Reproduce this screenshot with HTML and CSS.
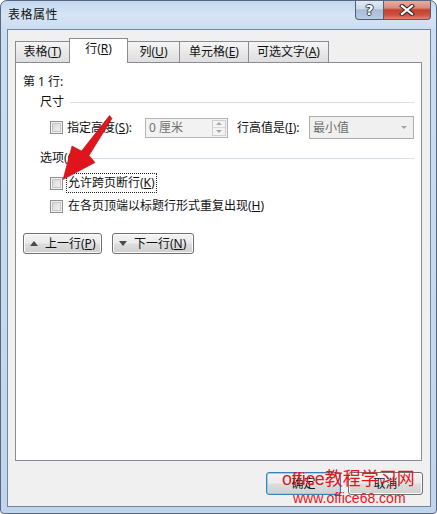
FILE: index.html
```html
<!DOCTYPE html>
<html lang="zh-CN">
<head>
<meta charset="utf-8">
<title>表格属性</title>
<link rel="stylesheet" href="styles.css">
</head>
<body>
<div class="window">
  <div class="titlebar">
    <span class="title">表格属性</span>
    <div class="caption-btns">
      <div class="cbtn help">?</div>
      <div class="cbtn close">
        <svg width="16" height="12" viewBox="0 0 16 12">
          <path d="M3 2 L13 10 M13 2 L3 10" stroke="#3a2a2a" stroke-width="4.2" stroke-linecap="square" fill="none"/>
          <path d="M3 2 L13 10 M13 2 L3 10" stroke="#ffffff" stroke-width="2.2" stroke-linecap="square" fill="none"/>
        </svg>
      </div>
    </div>
  </div>
  <div class="client">
    <div class="tabs">
      <div class="tab t1">表格(<u>T</u>)</div>
      <div class="tab t2 active">行(<u>R</u>)</div>
      <div class="tab t3">列(<u>U</u>)</div>
      <div class="tab t4">单元格(<u>E</u>)</div>
      <div class="tab t5">可选文字(<u>A</u>)</div>
    </div>
    <div class="panel">
      <div class="row-title">第 1 行:</div>
      <div class="group-head"><span>尺寸</span><i class="rule"></i></div>
      <div class="size-row">
        <span class="cb"></span>
        <span class="lbl-s">指定高度(<u>S</u>):</span>
        <div class="spin">
          <span class="spin-val">0 厘米</span>
          <div class="spin-btns"><i class="sb up"></i><i class="sb down"></i></div>
        </div>
        <span class="lbl-h">行高值是(<u>I</u>):</span>
        <div class="combo"><span class="combo-val">最小值</span><i class="drop"></i></div>
      </div>
      <div class="group-head opt"><span>选项(<u>O</u>)</span><i class="rule"></i></div>
      <div class="check-row first"><span class="cb"></span><span class="clbl focus">允许跨页断行(<u>K</u>)</span></div>
      <div class="check-row second"><span class="cb"></span><span class="clbl">在各页顶端以标题行形式重复出现(<u>H</u>)</span></div>
      <div class="nav-row">
        <div class="btn nav prev"><i class="tri tri-up"></i><span>上一行(<u>P</u>)</span></div>
        <div class="btn nav next"><i class="tri tri-down"></i><span>下一行(<u>N</u>)</span></div>
      </div>
    </div>
    <div class="footer">
      <div class="btn dlg ok">确定</div>
      <div class="btn dlg">取消</div>
    </div>
  </div>
  <svg class="arrow" width="437" height="514" viewBox="0 0 437 514">
    <polygon points="109.5,115.5 112,118.5 89,155.5 95,162.5 63,179.5 72,146 81.5,151" fill="#e0141c" stroke="#b80e14" stroke-width="0.6" stroke-linejoin="round"/>
  </svg>
  <div class="wm wm1">office教程学习网</div>
  <div class="wm wm2">www.office68.com</div>
</div>
</body>
</html>
```

FILE: styles.css
```css
html, body {
  margin: 0;
  padding: 0;
  background: #ffffff;
}

body {
  font-family: "Noto Sans", "Noto Sans CJK SC", sans-serif;
  font-size: 12px;
  color: #111;
}

u {
  text-decoration: underline;
  text-underline-offset: 1px;
}

.window {
  position: relative;
  width: 437px;
  height: 514px;
  box-sizing: border-box;
  border: 1px solid #56687e;
  border-radius: 7px 7px 4px 4px;
  background: linear-gradient(to bottom, #c3d8ef 0px, #d6e5f5 14px, #cbddf1 28px, #c0d5ed 100%);
  display: flex;
  flex-direction: column;
  overflow: hidden;
}

.titlebar {
  height: 28px;
  flex: none;
  display: flex;
  justify-content: space-between;
  align-items: flex-start;
  padding-left: 7px;
}

.title {
  line-height: 28px;
  color: #111;
  font-size: 12px;
  letter-spacing: 0.5px;
}

.caption-btns {
  display: flex;
  margin-top: -1px;
  margin-right: 5px;
}

.cbtn {
  height: 20px;
  box-sizing: border-box;
  border: 1px solid #4f6075;
  border-top: none;
  display: flex;
  align-items: center;
  justify-content: center;
}

.help {
  width: 29px;
  border-radius: 0 0 0 4px;
  background: linear-gradient(to bottom, #e3ebf5 0%, #cbd9ea 45%, #a9bdd6 52%, #b8cbe2 100%);
  color: #ffffff;
  font-family: "DejaVu Sans", sans-serif;
  font-size: 14px;
  font-weight: bold;
  line-height: 18px;
  text-shadow: 0 0 1px #243142, 1px 0 0 #3b4b5e, -1px 0 0 #3b4b5e, 0 1px 0 #3b4b5e, 0 -1px 0 #3b4b5e;
}

.close {
  width: 48px;
  margin-left: -1px;
  border-radius: 0 0 4px 0;
  background: linear-gradient(to bottom, #e9b2a8 0%, #d98a7b 42%, #c4412f 52%, #cf5340 80%, #e08472 100%);
}

.client {
  flex: 1;
  margin: 0 5px 6px 6px;
  border: 1px solid #74869b;
  background: #f0f0f0;
  display: flex;
  flex-direction: column;
}

.tabs {
  height: 32px;
  flex: none;
  margin-left: 7px;
  display: flex;
  align-items: flex-end;
}

.tab {
  height: 21px;
  box-sizing: border-box;
  border: 1px solid #898c95;
  border-bottom: none;
  background: linear-gradient(to bottom, #f5f5f5 0%, #e9e9e9 50%, #dedede 100%);
  display: flex;
  align-items: center;
  justify-content: center;
  line-height: 16px;
  padding-bottom: 1px;
  margin-left: -1px;
}

.t1 { width: 55px; margin-left: 0; }
.t2 { width: 59px; }
.t3 { width: 53px; }
.t4 { width: 70px; }
.t5 { width: 81px; }

.tab.active {
  position: relative;
  z-index: 1;
  height: 25px;
  margin-bottom: -1px;
  background: #ffffff;
  padding-bottom: 4px;
}

.panel {
  width: 407px;
  height: 399px;
  box-sizing: border-box;
  margin-left: 7px;
  border: 1px solid #898c95;
  background: #ffffff;
  padding: 11px 7px 0 7px;
  flex: none;
}

.row-title {
  line-height: 16px;
  height: 16px;
}

.group-head {
  display: flex;
  align-items: center;
  height: 16px;
  line-height: 16px;
  margin-top: 4px;
  margin-left: 17px;
}

.group-head .rule {
  flex: 1;
  height: 1px;
  background: #d7dfe5;
  margin-left: 6px;
}

.group-head.opt {
  margin-top: 11px;
}

.size-row {
  display: flex;
  align-items: center;
  height: 23px;
  margin-top: 6px;
  margin-left: 27px;
}

.cb {
  width: 13px;
  height: 13px;
  box-sizing: border-box;
  border: 1px solid #8e8f8f;
  background: linear-gradient(135deg, #cfcfcf 0%, #e6e6e6 50%, #f7f7f7 100%);
  box-shadow: inset 0 0 0 1px #f2f2f2, inset 0 0 0 2px #c4c4c4;
  flex: none;
}

.lbl-s {
  width: 78px;
  margin-left: 4px;
  line-height: 16px;
}

.spin {
  width: 83px;
  height: 20px;
  box-sizing: border-box;
  border: 1px solid #b3b5b8;
  background: #f2f2f2;
  display: flex;
  align-items: center;
  justify-content: space-between;
  padding-left: 3px;
  padding-right: 1px;
}

.spin-val {
  color: #707070;
  line-height: 16px;
}

.spin-btns {
  width: 14px;
  height: 16px;
  box-sizing: border-box;
  border: 1px solid #cfcfcf;
  display: flex;
  flex-direction: column;
  background: #f4f4f4;
}

.sb {
  flex: 1;
  display: flex;
  align-items: center;
  justify-content: center;
}

.sb.up {
  border-bottom: 1px solid #d9d9d9;
}

.sb::before {
  content: "";
  width: 0;
  height: 0;
  border-left: 3px solid transparent;
  border-right: 3px solid transparent;
}

.sb.up::before {
  border-bottom: 3px solid #a8a8a8;
}

.sb.down::before {
  border-top: 3px solid #a8a8a8;
}

.lbl-h {
  width: 72px;
  margin-left: 9px;
  line-height: 16px;
}

.combo {
  width: 105px;
  height: 23px;
  box-sizing: border-box;
  border: 1px solid #adadad;
  background: #f0f0f0;
  display: flex;
  align-items: center;
  justify-content: space-between;
  padding-left: 3px;
}

.combo-val {
  color: #6d6d6d;
  line-height: 16px;
}

.drop {
  width: 18px;
  height: 21px;
  display: flex;
  align-items: center;
  justify-content: center;
}

.drop::before {
  content: "";
  width: 0;
  height: 0;
  border-left: 3px solid transparent;
  border-right: 3px solid transparent;
  border-top: 3px solid #a3a3a3;
}

.check-row {
  display: flex;
  align-items: center;
  height: 20px;
  margin-left: 27px;
}

.check-row.first {
  margin-top: 7px;
}

.check-row.second {
  margin-top: 3px;
}

.clbl {
  margin-left: 3px;
  height: 20px;
  box-sizing: border-box;
  border: 1px solid transparent;
  padding: 0 1px;
  line-height: 18px;
}

.clbl.focus {
  border: 1px dotted #222;
}

.nav-row {
  display: flex;
  gap: 10px;
  margin-top: 17px;
}

.btn {
  box-sizing: border-box;
  border: 1px solid #707070;
  border-radius: 3px;
  background: linear-gradient(to bottom, #f3f3f3 0%, #ebebeb 48%, #dddddd 52%, #cfcfcf 100%);
  box-shadow: inset 0 0 0 1px #fbfbfb;
  display: flex;
  align-items: center;
  line-height: 16px;
}

.nav {
  height: 21px;
  padding-left: 6px;
}

.prev { width: 79px; }
.next { width: 82px; }

.tri {
  width: 0;
  height: 0;
  border-left: 4px solid transparent;
  border-right: 4px solid transparent;
  margin-right: 7px;
}

.tri-up {
  border-bottom: 5px solid #4a4a4a;
}

.tri-down {
  border-top: 5px solid #4a4a4a;
}

.footer {
  display: flex;
  justify-content: flex-end;
  gap: 7px;
  margin-top: 11px;
  padding-right: 7px;
}

.dlg {
  width: 75px;
  height: 23px;
  justify-content: center;
}

.ok {
  border-color: #3c7fb1;
  box-shadow: inset 0 0 0 1px #8fd4f5;
}

.arrow {
  position: absolute;
  left: -1px;
  top: -1px;
  pointer-events: none;
}

.wm {
  position: absolute;
  color: #e8141c;
  font-family: "Liberation Sans", "Noto Sans CJK SC", sans-serif;
  white-space: nowrap;
  pointer-events: none;
}

.wm1 {
  left: 281px;
  top: 467px;
  font-size: 18px;
  line-height: 22px;
}

.wm2 {
  left: 292px;
  top: 489px;
  font-size: 14px;
  line-height: 16px;
}
```
